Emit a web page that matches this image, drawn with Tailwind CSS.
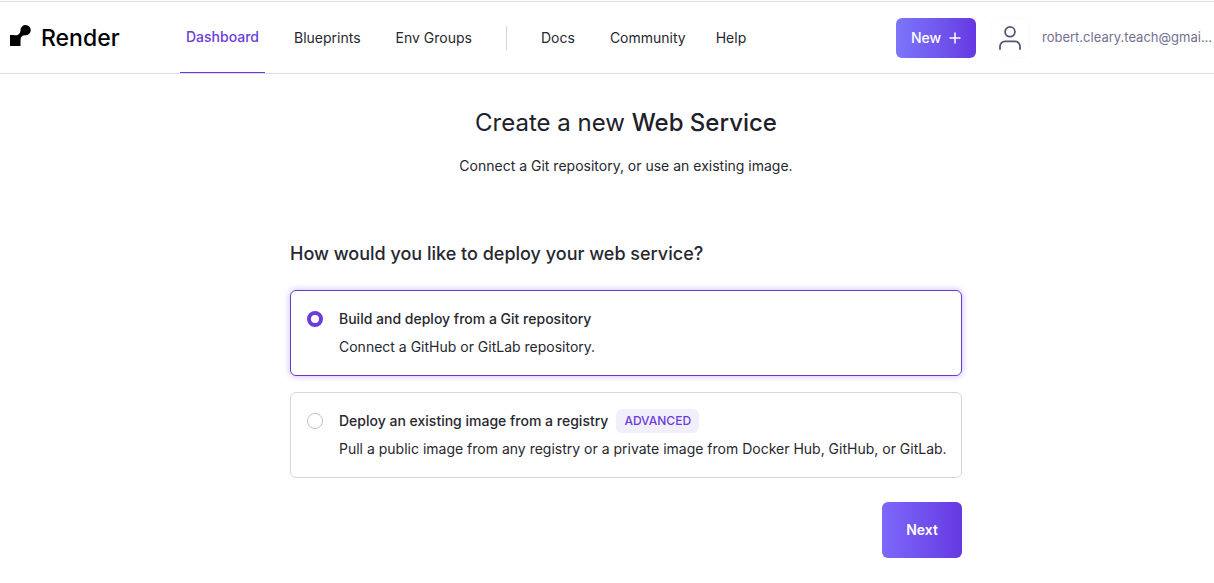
<!DOCTYPE html>
<html lang="en">
<head>
<meta charset="utf-8">
<meta name="viewport" content="width=device-width, initial-scale=1">
<title>Create a new Web Service</title>
<script src="https://cdn.jsdelivr.net/npm/@tailwindcss/browser@4"></script>
</head>
<body class="min-h-screen bg-white font-['Inter',sans-serif] text-sm text-[#27272f]">
<header class="mt-px flex h-[73px] items-stretch border-y border-[#dcdde3] pl-2.5 pr-1">
  <a href="#" class="flex w-[170px] shrink-0 items-center gap-2.5 text-[23px] font-medium text-black">
    <svg class="mb-1 size-[21px]" viewBox="0 0 21 21" fill="currentColor" aria-hidden="true"><path d="M15.600 0a5.100 5.100 0 0 0-5.100 4.900c-.1 2.500-1.200 5.300-4.700 5.300-1.900 0-3-.2-5.800-.2v11h10.500v-5.500c0-3.300 1.600-5.200 4.800-5.200h.3A5.150 5.150 0 0 0 15.600 0Z"/></svg>
    <span class="leading-6">Render</span>
  </a>
  <nav class="flex grow items-stretch">
    <a href="#" class="flex items-center border-b border-[#6639d8] px-1.5 font-medium text-[#6a3ddb]">Dashboard</a>
    <a href="#" class="ml-[23px] flex items-center px-1.5">Blueprints</a>
    <a href="#" class="ml-[23px] flex items-center px-1.5">Env Groups</a>
    <span class="mx-7 h-6 w-px self-center bg-[#d4d5df]"></span>
    <a href="#" class="flex items-center px-1.5">Docs</a>
    <a href="#" class="ml-[23px] flex items-center px-1.5">Community</a>
    <a href="#" class="ml-[18px] flex items-center px-1.5">Help</a>
  </nav>
  <div class="flex shrink-0 items-center">
    <button type="button" class="flex h-10 w-20 items-center justify-center gap-2 rounded-md bg-linear-to-r from-[#7d75fa] to-[#6638e2] font-medium text-white">New
      <svg class="size-3" viewBox="0 0 12 12" stroke="currentColor" stroke-width="1.5" aria-hidden="true"><path d="M6 .5v11M.5 6h11"/></svg>
    </button>
    <button type="button" aria-label="Account" class="ml-3.5 flex size-10 items-center justify-center rounded-lg border border-[#fbfbfd] text-[#505971]">
      <svg class="h-6 w-[22px]" viewBox="0 0 22 24" fill="none" stroke="currentColor" stroke-width="1.800" stroke-linecap="round" aria-hidden="true"><circle cx="11" cy="5.800" r="4.900"/><path d="M1 23v-2.700a5 5 0 0 1 5-5h10a5 5 0 0 1 5 5V23"/></svg>
    </button>
    <span class="ml-3 w-[168px] whitespace-nowrap text-[13px] text-[#737092]">robert.cleary.teach@gmai...</span>
  </div>
</header>
<main class="pl-[38px]">
  <div class="mx-auto max-w-2xl">
    <h1 class="mt-[33px] text-center text-2xl text-[#20202a]">Create a new <strong class="font-medium">Web Service</strong></h1>
    <p class="mt-[13px] text-center leading-7">Connect a Git repository, or use an existing image.</p>
    <form class="mt-[60px]">
      <fieldset>
        <legend class="text-lg font-medium">How would you like to deploy your web service?</legend>
        <div class="mt-[22px] flex flex-col gap-4">
          <label class="flex gap-4 rounded-md border border-[#6639c9] py-3.5 pl-4 pr-2 shadow-[0_0_6px_1px_#d5c8fb]">
            <input type="radio" name="source" value="git" checked class="mt-1.5 size-4 shrink-0 appearance-none rounded-full border border-[#bfbfd6] checked:border-4 checked:border-[#6a3ddb]">
            <span><span class="block font-medium leading-7">Build and deploy from a Git repository</span><span class="block leading-7">Connect a GitHub or GitLab repository.</span></span>
          </label>
          <label class="flex gap-4 rounded-md border border-[#d5d5e3] py-3.5 pl-4 pr-2">
            <input type="radio" name="source" value="image" class="mt-1.5 size-4 shrink-0 appearance-none rounded-full border border-[#bfbfd6] checked:border-4 checked:border-[#6a3ddb]">
            <span><span class="flex items-center gap-2 font-medium leading-7">Deploy an existing image from a registry <span class="rounded-md bg-[#f2effd] px-2 text-xs leading-6 text-[#6a3ddb]">ADVANCED</span></span><span class="block leading-7">Pull a public image from any registry or a private image from Docker Hub, GitHub, or GitLab.</span></span>
          </label>
        </div>
      </fieldset>
      <div class="mt-6 flex justify-end">
        <button type="submit" class="h-14 w-20 rounded-md bg-linear-to-r from-[#7d68fa] to-[#6638e2] font-semibold text-white">Next</button>
      </div>
    </form>
  </div>
</main>
</body>
</html>
